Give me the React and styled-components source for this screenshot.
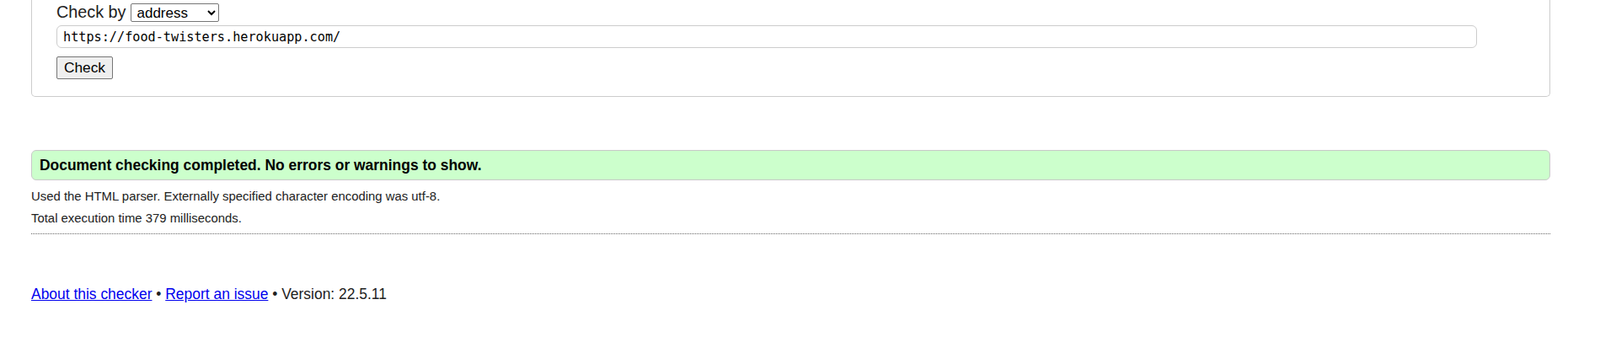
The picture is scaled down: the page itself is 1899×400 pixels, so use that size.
import React from 'react'
import styled, { createGlobalStyle } from 'styled-components'

const GlobalStyle = createGlobalStyle`
  html, body {
    margin: 0;
    padding: 0;
    background: #fff;
  }
  body {
    font-family: "Liberation Sans", Arial, sans-serif;
    color: #222;
    font-size: 17.6px;
  }
`

const Page = styled.div`
  padding: 0 59px 0 37px;
`

const Panel = styled.div`
  border: 1px solid #cccccc;
  border-top: none;
  border-radius: 0 0 5px 5px;
  padding: 3px 0 20px 29px;
`

const CheckRow = styled.div`
  display: flex;
  align-items: center;
  height: 23px;
  font-size: 19.8px;
`

const Label = styled.label`
  margin-right: 6px;
`

const ModeSelect = styled.select`
  width: 105px;
  height: 22px;
  font-family: "Liberation Sans", Arial, sans-serif;
  font-size: 17px;
  color: #000;
  background: #fff;
  border: 1px solid #767676;
  border-radius: 2px;
  padding: 0 0 0 2px;
`

const UrlInput = styled.input`
  display: block;
  box-sizing: border-box;
  margin-top: 4px;
  width: 1686px;
  height: 27px;
  padding: 0 7px;
  border: 1px solid #cccccc;
  border-radius: 6px;
  font-family: "DejaVu Sans Mono", "Liberation Mono", monospace;
  font-size: 15.2px;
  color: #000;
  outline: none;
`

const CheckButton = styled.button`
  display: block;
  margin-top: 10px;
  box-sizing: border-box;
  width: 67px;
  height: 27px;
  padding: 0;
  font-family: "Liberation Sans", Arial, sans-serif;
  font-size: 17.3px;
  color: #000;
  background: #efefef;
  border: 1px solid #767676;
  border-radius: 2px;
`

const Success = styled.div`
  margin-top: 63px;
  box-sizing: border-box;
  height: 36px;
  display: flex;
  align-items: center;
  padding: 0 9px;
  background: #ccffcc;
  border: 1px solid #c8c8c8;
  border-radius: 6px;
  font-weight: bold;
  font-size: 17.45px;
  color: #000;
`

const Details = styled.div`
  margin-top: 11px;
  display: flex;
  flex-direction: column;
  gap: 8.5px;
`

const Note = styled.p`
  margin: 0;
  font-size: 14.9px;
  line-height: 17px;
  color: #222;
`

const Rule = styled.hr`
  margin: 9px 0 0;
  height: 0;
  border: none;
  border-top: 1px dotted #666;
`

const Footer = styled.p`
  margin: 61px 0 0;
  font-size: 17.45px;
  line-height: 20px;
  color: #222;
`

const Link = styled.a`
  color: #0000ee;
  text-decoration: underline;
`

export default function App() {
  return (
    <Page>
      <GlobalStyle />
      <Panel>
        <CheckRow>
          <Label htmlFor="docselect">Check by</Label>
          <ModeSelect id="docselect" defaultValue="address">
            <option value="address">address</option>
            <option value="file">file upload</option>
            <option value="textarea">text input</option>
          </ModeSelect>
        </CheckRow>
        <UrlInput type="url" defaultValue="https://food-twisters.herokuapp.com/" />
        <CheckButton type="button">Check</CheckButton>
      </Panel>
      <Success>Document checking completed. No errors or warnings to show.</Success>
      <Details>
        <Note>Used the HTML parser. Externally specified character encoding was utf-8.</Note>
        <Note>Total execution time 379 milliseconds.</Note>
      </Details>
      <Rule />
      <Footer>
        <Link href="#about">About this checker</Link> • <Link href="#issue">Report an issue</Link> • Version: 22.5.11
      </Footer>
    </Page>
  )
}
